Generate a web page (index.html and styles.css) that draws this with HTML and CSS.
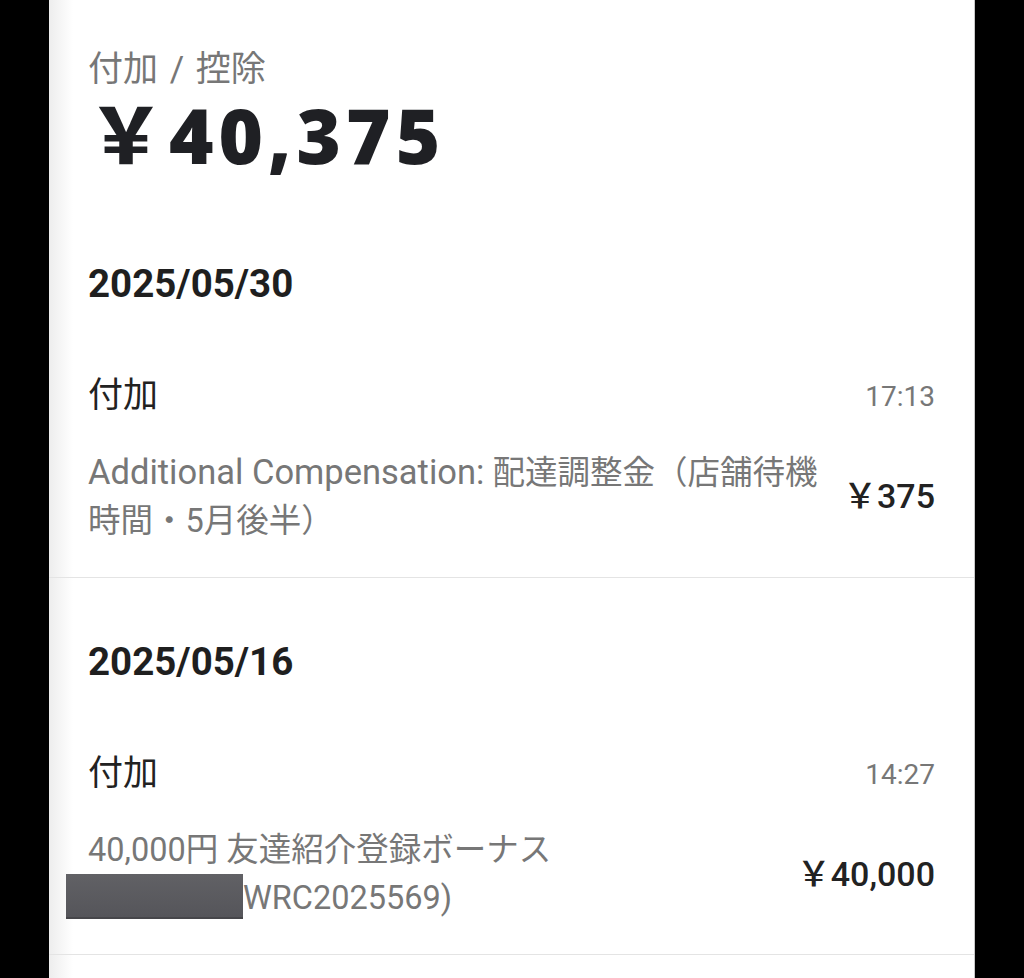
FILE: index.html
```html
<!DOCTYPE html>
<html lang="ja">
<head>
    <meta charset="UTF-8">
    <meta name="viewport" content="width=device-width, initial-scale=1.0">
    <title>付加 / 控除</title>
    <link rel="stylesheet" href="styles.css">
</head>
<body>
    <div class="panel">
        <div class="summary">
            <div class="label">付加 / 控除</div>
            <div class="total">￥40,375</div>
        </div>

        <div class="day">
            <div class="date">2025/05/30</div>
            <div class="row-head">
                <span class="title">付加</span>
                <span class="time">17:13</span>
            </div>
            <div class="row-body">
                <div class="desc"><span class="en">Additional Compensation:</span> 配達調整金（店舗待機時間・5月後半）</div>
                <div class="amount">￥375</div>
            </div>
        </div>

        <div class="day">
            <div class="date">2025/05/16</div>
            <div class="row-head">
                <span class="title">付加</span>
                <span class="time">14:27</span>
            </div>
            <div class="row-body">
                <div class="desc">40,000円 友達紹介登録ボーナス<br><span class="redact"></span>WRC2025569)</div>
                <div class="amount">￥40,000</div>
            </div>
        </div>
    </div>
</body>
</html>
```

FILE: styles.css
```css
body {
    margin: 0;
    background: #000;
    font-family: Roboto, "Noto Sans CJK JP", sans-serif;
    color: #222;
}
.panel {
    width: 925px;
    min-height: 978px;
    margin-left: 49px;
    background: linear-gradient(to right, #ededed, #fff 24px);
    border-right: 1px solid #c8c8c8;
}
.summary {
    padding: 50px 39px 25px;
}
.label {
    font-size: 35px;
    line-height: 40px;
    word-spacing: 3px;
    color: #777;
}
.total {
    margin-top: 5px;
    font-family: "Noto Sans", "Noto Sans CJK JP", sans-serif;
    font-size: 76px;
    line-height: 80px;
    font-weight: 900;
    letter-spacing: 5px;
    color: #1f2024;
}
.day {
    padding: 60px 39px 32px;
    border-bottom: 1px solid #e4e4e4;
}
.date {
    font-size: 38.5px;
    line-height: 48px;
    font-weight: 700;
    color: #1f1f1f;
}
.row-head {
    display: flex;
    justify-content: space-between;
    align-items: center;
    margin-top: 66px;
}
.title {
    font-size: 35px;
    line-height: 44px;
    color: #222;
}
.time {
    font-size: 28px;
    color: #777;
}
.row-body {
    display: flex;
    align-items: center;
    gap: 20px;
    margin-top: 30px;
}
.desc {
    flex: 1;
    font-size: 32.5px;
    line-height: 48px;
    color: #777;
}
.desc .en {
    font-size: 34.5px;
}
.amount {
    margin-top: -6px;
    font-size: 34px;
    font-weight: 500;
    color: #222;
    white-space: nowrap;
}
.redact {
    display: inline-block;
    width: 177px;
    height: 45px;
    margin-left: -22px;
    vertical-align: top;
    background: linear-gradient(#616165, #55555a);
    border-bottom: 2px solid #46464a;
    box-sizing: border-box;
}
```
